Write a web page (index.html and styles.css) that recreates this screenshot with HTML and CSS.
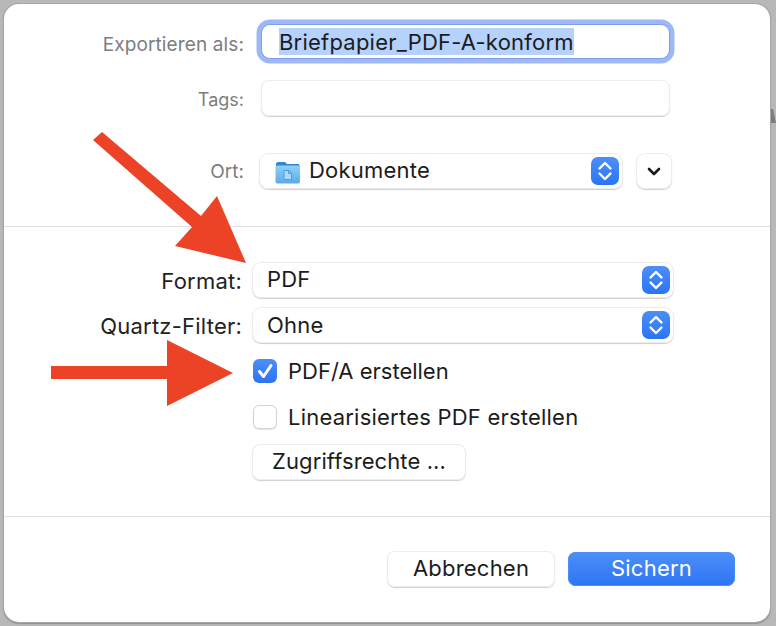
FILE: index.html
```html
<!DOCTYPE html>
<html lang="de">
<head>
<meta charset="utf-8">
<title>Exportieren als</title>
<link rel="stylesheet" href="styles.css">
</head>
<body>
<div class="behind"></div>
<div class="sheet">
  <section class="top">
    <div class="row row-name">
      <label class="label muted name-label">Exportieren als:</label>
      <div class="field focus"><span class="selected">Briefpapier_PDF-A-konform</span></div>
    </div>
    <div class="row row-tags">
      <label class="label muted tags-label">Tags:</label>
      <div class="field tags"></div>
    </div>
    <div class="row row-place">
      <label class="label muted">Ort:</label>
      <div class="popup place">
        <svg class="folder" viewBox="0 0 25 25" width="25" height="25">
          <defs><linearGradient id="fg" x1="0" y1="0" x2="0" y2="1"><stop offset="0" stop-color="#8fd0f7"/><stop offset="1" stop-color="#5aabe8"/></linearGradient></defs>
          <path d="M1 5.500C1 4 1.800 3 3 3h6c1 0 1.500.5 2.200 1.300l.8.700h11c.8 0 1.500.7 1.500 1.500V8H1z" fill="#2f86d6"/>
          <rect x="0.500" y="6.500" width="24.500" height="18" rx="1.800" fill="url(#fg)"/>
          <path d="M9 11.500h4.500l3 3v6H9z" fill="#a9dbf8" stroke="#4c9ddd" stroke-width="1"/>
          <path d="M13.500 11.500v3h3" fill="none" stroke="#4c9ddd" stroke-width="1"/>
        </svg>
        <span class="popup-text lifted">Dokumente</span>
        <span class="stepper">
          <svg viewBox="0 0 28 28" width="28" height="28"><path d="M8.500 11.500 14 6l5.500 5.500M8.500 16.500 14 22l5.500-5.500" fill="none" stroke="#fff" stroke-width="2.400" stroke-linecap="round" stroke-linejoin="round"/></svg>
        </span>
      </div>
      <div class="popup more">
        <svg viewBox="0 0 36 36" width="36" height="36"><path d="M13 16l5 5 5-5" fill="none" stroke="#1a1a1a" stroke-width="2.600" stroke-linecap="round" stroke-linejoin="round"/></svg>
      </div>
    </div>
  </section>

  <section class="middle">
    <div class="row row-format">
      <label class="label narrow">Format:</label>
      <div class="popup wide">
        <span class="popup-text plain lifted">PDF</span>
        <span class="stepper">
          <svg viewBox="0 0 28 28" width="28" height="28"><path d="M8.500 11.500 14 6l5.500 5.500M8.500 16.500 14 22l5.500-5.500" fill="none" stroke="#fff" stroke-width="2.400" stroke-linecap="round" stroke-linejoin="round"/></svg>
        </span>
      </div>
    </div>
    <div class="row row-quartz">
      <label class="label narrow">Quartz-Filter:</label>
      <div class="popup wide">
        <span class="popup-text plain">Ohne</span>
        <span class="stepper">
          <svg viewBox="0 0 28 28" width="28" height="28"><path d="M8.500 11.500 14 6l5.500 5.500M8.500 16.500 14 22l5.500-5.500" fill="none" stroke="#fff" stroke-width="2.400" stroke-linecap="round" stroke-linejoin="round"/></svg>
        </span>
      </div>
    </div>
    <div class="check-row check-first">
      <span class="box checked">
        <svg viewBox="0 0 24 24" width="24" height="24"><path d="M6.500 12.500 10.500 17.500 18 6.500" fill="none" stroke="#fff" stroke-width="3" stroke-linecap="round" stroke-linejoin="round"/></svg>
      </span>
      <span class="tight">PDF/A erstellen</span>
    </div>
    <div class="check-row check-second">
      <span class="box"></span>
      <span>Linearisiertes PDF erstellen</span>
    </div>
    <button class="btn access">Zugriffsrechte ...</button>
  </section>

  <footer class="bottom">
    <button class="btn cancel">Abbrechen</button>
    <button class="btn primary">Sichern</button>
  </footer>
</div>

<svg class="arrows" viewBox="0 0 776 626" width="776" height="626">
  <polygon points="93,140 102,132 201,216 217,196 246,263 175,246 192,227" fill="#ec4327"/>
  <polygon points="51,366 167,366 167,340 233,373 167,406 167,379 51,379" fill="#ec4327"/>
</svg>
</body>
</html>
```

FILE: styles.css
```css
* { box-sizing: border-box; }
html, body { margin: 0; height: 626px; overflow: hidden; }
body {
  background: #b8b8b8;
  font-family: Inter, "Liberation Sans", sans-serif;
  font-size: 22px;
  letter-spacing: 0.22px;
  color: #1c1c1c;
  position: relative;
  padding: 4px 6px 4px 4px;
}
.behind {
  position: absolute;
  right: 0;
  top: 109px;
  width: 5px;
  height: 14px;
  background: #7c7c7c;
  clip-path: polygon(0 0, 40% 0, 100% 100%, 0 100%);
}
.sheet {
  height: 618px;
  background: #fff;
  border-radius: 15px;
  box-shadow: 0 0 0 1px #a6a6a6, 0 1px 1px 1px #909090;
  display: flex;
  flex-direction: column;
}
.top { height: 223px; padding-top: 21px; border-bottom: 1px solid #dfdfdf; flex: none; }
.middle { height: 290px; padding-top: 35px; border-bottom: 1px solid #dfdfdf; flex: none; }
.bottom {
  flex: 1;
  display: flex;
  justify-content: flex-end;
  align-items: flex-start;
  gap: 13px;
  padding: 34px 35px 0 0;
}
.row { display: flex; align-items: center; }
.label { text-align: right; flex: none; }
.muted { width: 240px; color: #7d7d7d; font-size: 19px; letter-spacing: 0; padding-top: 1px; }
.name-label { padding-top: 6px; letter-spacing: 0.12px; }
.tags-label { padding-top: 3px; font-size: 18px; }
.narrow { width: 238px; color: #222; padding-top: 2px; }
.field {
  background: #fff;
  border-radius: 8px;
  box-shadow: inset 0 0 0 1px #ececec, 0 1px 1px #cfcfcf;
}
.focus {
  margin-left: 18px;
  width: 407px;
  height: 33px;
  padding: 3px 0 0 17px;
  line-height: 29px;
  box-shadow: 0 0 0 1px #7e9eea, 0 0 0 5.5px #9db8f5;
}
.selected { background: #b4d2fb; display: inline-block; height: 27px; }
.row-tags { margin-top: 22px; }
.tags { margin-left: 17px; width: 409px; height: 36px; }
.row-place { margin-top: 37px; }
.popup {
  display: flex;
  align-items: center;
  height: 36px;
  background: #fff;
  border-radius: 9px;
  box-shadow: inset 0 0 0 1px #ececec, 0 1px 1px #cfcfcf;
  flex: none;
}
.place { margin-left: 15px; width: 364px; padding-left: 16px; }
.folder { flex: none; margin-right: 9px; }
.popup-text { flex: 1; }
.lifted { padding-bottom: 2px; }
.plain { padding-left: 15px; }
.tight { letter-spacing: 0; }
.stepper {
  flex: none;
  width: 28px;
  height: 28px;
  margin-right: 4px;
  border-radius: 7px;
  background: linear-gradient(#4c8ff8, #2c74f4);
  display: flex;
}
.more { margin-left: 13px; width: 36px; }
.wide { margin-left: 10px; width: 422px; }
.row-quartz { margin-top: 9px; }
.check-row { display: flex; align-items: center; gap: 11px; margin-left: 249px; height: 24px; }
.check-first { margin-top: 16px; }
.check-second { margin-top: 22px; }
.box {
  flex: none;
  width: 24px;
  height: 24px;
  border-radius: 6px;
  background: #fff;
  box-shadow: inset 0 0 0 1px #d4d4d4, 0 1px 1px #e2e2e2;
  display: flex;
}
.box.checked { background: linear-gradient(#4c8ff8, #2c74f4); box-shadow: none; }
.btn {
  font: inherit;
  letter-spacing: inherit;
  color: inherit;
  border: 0;
  background: #fff;
  border-radius: 8px;
  box-shadow: inset 0 0 0 1px #ececec, 0 1px 1px #cfcfcf;
  padding: 0 0 2px;
  height: 36px;
  display: block;
}
.access { margin: 15px 0 0 248px; width: 214px; letter-spacing: 0.1px; }
.cancel { width: 168px; }
.primary {
  width: 167px;
  height: 34px;
  margin-top: 1px;
  background: linear-gradient(#4d90f8, #2c74f4);
  box-shadow: inset 0 0 0 1px #4d8df5;
  color: #fff;
}
.arrows { position: absolute; left: 0; top: 0; pointer-events: none; }
```
